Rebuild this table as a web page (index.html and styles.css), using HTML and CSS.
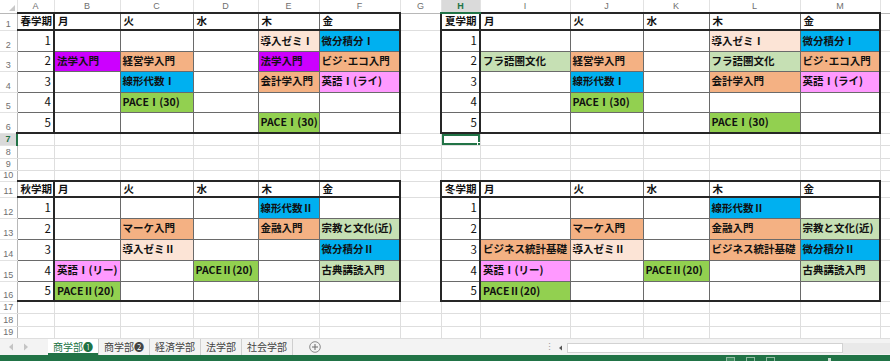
FILE: index.html
```html
<!DOCTYPE html>
<html lang="ja">
<head>
<meta charset="utf-8">
<title>時間割</title>
<link rel="stylesheet" href="styles.css">
</head>
<body>
<div class="book">
<table class="sheet">
<colgroup>
<col class="w17"><col class="w37"><col class="w66"><col class="w73"><col class="w65"><col class="w61"><col class="w81"><col class="w41"><col class="w39"><col class="w90"><col class="w73"><col class="w66"><col class="w91"><col class="w80"><col class="w10">
</colgroup>
<thead>
<tr class="h13"><th class="corner"></th><th>A</th><th>B</th><th>C</th><th>D</th><th>E</th><th>F</th><th>G</th><th class="cur">H</th><th>I</th><th>J</th><th>K</th><th>L</th><th>M</th><th></th></tr>
</thead>
<tbody>
<tr class="h17 top"><th>1</th><td class="t k term">春学期</td><td class="t">月</td><td class="t">火</td><td class="t">水</td><td class="t">木</td><td class="t f">金</td><td></td><td class="t k kl term">夏学期</td><td class="t">月</td><td class="t">火</td><td class="t">水</td><td class="t">木</td><td class="t f">金</td><td></td></tr>
<tr class="h21"><th>2</th><td class="t k n">1</td><td class="t"></td><td class="t"></td><td class="t"></td><td class="t pe">導入ゼミⅠ</td><td class="t f bl">微分積分Ⅰ</td><td></td><td class="t k kl n">1</td><td class="t"></td><td class="t"></td><td class="t"></td><td class="t pe">導入ゼミⅠ</td><td class="t f bl">微分積分Ⅰ</td><td></td></tr>
<tr class="h20"><th>3</th><td class="t k n">2</td><td class="t pu">法学入門</td><td class="t or">経営学入門</td><td class="t"></td><td class="t pu">法学入門</td><td class="t f or">ビジ･エコ入門</td><td></td><td class="t k kl n">2</td><td class="t lg">フラ語圏文化</td><td class="t or">経営学入門</td><td class="t"></td><td class="t lg">フラ語圏文化</td><td class="t f or">ビジ･エコ入門</td><td></td></tr>
<tr class="h21"><th>4</th><td class="t k n">3</td><td class="t"></td><td class="t bl">線形代数Ⅰ</td><td class="t"></td><td class="t or">会計学入門</td><td class="t f pk">英語Ⅰ(ライ)</td><td></td><td class="t k kl n">3</td><td class="t"></td><td class="t bl">線形代数Ⅰ</td><td class="t"></td><td class="t or">会計学入門</td><td class="t f pk">英語Ⅰ(ライ)</td><td></td></tr>
<tr class="h20"><th>5</th><td class="t k n">4</td><td class="t"></td><td class="t gr">PACEⅠ(30)</td><td class="t"></td><td class="t"></td><td class="t f"></td><td></td><td class="t k kl n">4</td><td class="t"></td><td class="t gr">PACEⅠ(30)</td><td class="t"></td><td class="t"></td><td class="t f"></td><td></td></tr>
<tr class="h21 last"><th>6</th><td class="t k n">5</td><td class="t"></td><td class="t"></td><td class="t"></td><td class="t gr">PACEⅠ(30)</td><td class="t f"></td><td></td><td class="t k kl n">5</td><td class="t"></td><td class="t"></td><td class="t"></td><td class="t gr">PACEⅠ(30)</td><td class="t f"></td><td></td></tr>
<tr class="h12"><th class="cur-row">7</th><td></td><td></td><td></td><td></td><td></td><td></td><td></td><td class="sel"><span class="handle"></span></td><td></td><td></td><td></td><td></td><td></td><td></td></tr>
<tr class="h13"><th>8</th><td></td><td></td><td></td><td></td><td></td><td></td><td></td><td></td><td></td><td></td><td></td><td></td><td></td><td></td></tr>
<tr class="h12"><th>9</th><td></td><td></td><td></td><td></td><td></td><td></td><td></td><td></td><td></td><td></td><td></td><td></td><td></td><td></td></tr>
<tr class="h11"><th>10</th><td></td><td></td><td></td><td></td><td></td><td></td><td></td><td></td><td></td><td></td><td></td><td></td><td></td><td></td></tr>
<tr class="h16 top"><th>11</th><td class="t k term">秋学期</td><td class="t">月</td><td class="t">火</td><td class="t">水</td><td class="t">木</td><td class="t f">金</td><td></td><td class="t k kl term">冬学期</td><td class="t">月</td><td class="t">火</td><td class="t">水</td><td class="t">木</td><td class="t f">金</td><td></td></tr>
<tr class="h21"><th>12</th><td class="t k n">1</td><td class="t"></td><td class="t"></td><td class="t"></td><td class="t bl">線形代数Ⅱ</td><td class="t f"></td><td></td><td class="t k kl n">1</td><td class="t"></td><td class="t"></td><td class="t"></td><td class="t bl">線形代数Ⅱ</td><td class="t f"></td><td></td></tr>
<tr class="h21"><th>13</th><td class="t k n">2</td><td class="t"></td><td class="t or">マーケ入門</td><td class="t"></td><td class="t or">金融入門</td><td class="t f lg">宗教と文化(近)</td><td></td><td class="t k kl n">2</td><td class="t"></td><td class="t or">マーケ入門</td><td class="t"></td><td class="t or">金融入門</td><td class="t f lg">宗教と文化(近)</td><td></td></tr>
<tr class="h21"><th>14</th><td class="t k n">3</td><td class="t"></td><td class="t pe">導入ゼミⅡ</td><td class="t"></td><td class="t"></td><td class="t f bl">微分積分Ⅱ</td><td></td><td class="t k kl n">3</td><td class="t or">ビジネス統計基礎</td><td class="t pe">導入ゼミⅡ</td><td class="t"></td><td class="t or">ビジネス統計基礎</td><td class="t f bl">微分積分Ⅱ</td><td></td></tr>
<tr class="h21"><th>15</th><td class="t k n">4</td><td class="t pk">英語Ⅰ(リー)</td><td class="t"></td><td class="t gr">PACEⅡ(20)</td><td class="t"></td><td class="t f lg">古典講読入門</td><td></td><td class="t k kl n">4</td><td class="t pk">英語Ⅰ(リー)</td><td class="t"></td><td class="t gr">PACEⅡ(20)</td><td class="t"></td><td class="t f lg">古典講読入門</td><td></td></tr>
<tr class="h20 last"><th>16</th><td class="t k n">5</td><td class="t gr">PACEⅡ(20)</td><td class="t"></td><td class="t"></td><td class="t"></td><td class="t f"></td><td></td><td class="t k kl n">5</td><td class="t gr">PACEⅡ(20)</td><td class="t"></td><td class="t"></td><td class="t"></td><td class="t f"></td><td></td></tr>
<tr class="h12"><th>17</th><td></td><td></td><td></td><td></td><td></td><td></td><td></td><td></td><td></td><td></td><td></td><td></td><td></td><td></td></tr>
<tr class="h13"><th>18</th><td></td><td></td><td></td><td></td><td></td><td></td><td></td><td></td><td></td><td></td><td></td><td></td><td></td><td></td></tr>
<tr class="h12"><th>19</th><td></td><td></td><td></td><td></td><td></td><td></td><td></td><td></td><td></td><td></td><td></td><td></td><td></td><td></td></tr>
</tbody>
</table>

<div class="tabbar">
  <div class="nav">
    <svg width="6" height="8" viewBox="0 0 6 8"><path d="M5 0.5 L1 4 L5 7.5 Z" fill="#c4c4c4"/></svg>
    <svg width="6" height="8" viewBox="0 0 6 8"><path d="M1 0.5 L5 4 L1 7.5 Z" fill="#c4c4c4"/></svg>
  </div>
  <div class="tabs">
    <div class="tab on">商学部❶</div>
    <div class="tab">商学部❷</div>
    <div class="tab">経済学部</div>
    <div class="tab">法学部</div>
    <div class="tab">社会学部</div>
  </div>
  <div class="add">
    <svg width="12" height="12" viewBox="0 0 12 12"><circle cx="6" cy="6" r="5.3" fill="none" stroke="#8a8a8a" stroke-width="1"/><path d="M6 3 V9 M3 6 H9" stroke="#6a6a6a" stroke-width="1"/></svg>
  </div>
  <div class="spacer"></div>
  <div class="hscroll">
    <div class="dots">⋮</div>
    <div class="larr"><svg width="5" height="6" viewBox="0 0 5 6"><path d="M4 0.5 L1 3 L4 5.5 Z" fill="#555"/></svg></div>
    <div class="track"></div>
    <div class="rest"></div>
  </div>
</div>
<div class="status">
  <div class="views"><span class="vb on"></span><span class="vb"></span><span class="vb"></span></div>
  <div class="zoomctl"><span class="knob"></span></div>
</div>
</div>
</body>
</html>
```

FILE: styles.css
```css
html, body {
  margin: 0;
  padding: 0;
  background: #ffffff;
}
body {
  width: 890px;
  height: 361px;
  overflow: hidden;
  font-family: "Noto Sans CJK JP", "Noto Sans", sans-serif;
}
.book {
  display: flex;
  flex-direction: column;
  width: 890px;
  height: 361px;
}
.sheet {
  border-collapse: collapse;
  table-layout: fixed;
  width: 890px;
}
.w17 { width: 17px; } .w37 { width: 37px; } .w66 { width: 66px; } .w73 { width: 73px; }
.w65 { width: 65px; } .w61 { width: 61px; } .w81 { width: 81px; } .w41 { width: 41px; }
.w39 { width: 39px; } .w90 { width: 90px; } .w91 { width: 91px; } .w80 { width: 80px; }
.w10 { width: 10px; }

.h11 { height: 11px; } .h12 { height: 12px; } .h13 { height: 13px; } .h16 { height: 16px; }
.h17 { height: 17px; } .h20 { height: 20px; } .h21 { height: 21px; }

.sheet th, .sheet td {
  padding: 0;
  overflow: hidden;
  white-space: nowrap;
  line-height: 1;
}
.sheet td {
  border: 1px solid #dedede;
  font-size: 10.5px;
  font-weight: 700;
  color: #111;
  padding: 0 2px;
  vertical-align: middle;
}
.sheet thead th {
  font-family: "Liberation Sans", "Noto Sans", sans-serif;
  font-weight: 400;
  font-size: 9px;
  color: #6f6f6f;
  background: #ffffff;
  border-right: 1px solid #e2e2e2;
  border-bottom: 1px solid #b8b8b8;
  text-align: center;
  vertical-align: middle;
}
.sheet thead th.corner {
  position: relative;
}
.sheet thead th.corner::after {
  content: "";
  position: absolute;
  right: 2px;
  bottom: 2px;
  border-left: 6px solid transparent;
  border-bottom: 6px solid #c8c8c8;
}
.sheet thead th.cur {
  background: #dadada;
  color: #217346;
  font-weight: 700;
  border-bottom: 2px solid #217346;
}
.sheet tbody th {
  font-family: "Liberation Sans", "Noto Sans", sans-serif;
  font-weight: 400;
  font-size: 9px;
  color: #6f6f6f;
  background: #ffffff;
  border-right: 1px solid #b8b8b8;
  border-bottom: 1px solid #e2e2e2;
  text-align: center;
  vertical-align: bottom;
  padding-bottom: 1px;
}
.sheet tbody th.cur-row {
  background: #dadada;
  color: #217346;
  font-weight: 700;
  border-right: 2px solid #217346;
}

/* timetable cells */
.sheet td.t { border: 1px solid #6a6a6a; }
.sheet tr.top td.t { border-top: 2px solid #262626; border-bottom: 2px solid #262626; }
.sheet tr.last td.t { border-bottom: 2px solid #262626; }
.sheet td.t.k { border-right: 2px solid #262626; }
.sheet td.t.kl { border-left: 2px solid #262626; }
.sheet td.t.f { border-right: 2px solid #262626; }
.sheet td.term { padding: 0 1px; }
.sheet td.n {
  text-align: right;
  font-size: 11.5px;
  font-weight: 400;
  padding-right: 2px;
}
.sheet tr.top td.t { padding-left: 3px; }

.pu { background: #cc00ff; }
.or { background: #f4b183; }
.bl { background: #00b0f0; }
.gr { background: #92d050; }
.pe { background: #fce4d6; }
.pk { background: #ff99ff; }
.lg { background: #c6e0b4; }

.sheet td.sel {
  position: relative;
  box-shadow: inset 0 0 0 2px #217346;
}
.handle {
  position: absolute;
  right: -3px;
  bottom: -3px;
  width: 4px;
  height: 4px;
  background: #217346;
  border: 1px solid #ffffff;
}

/* sheet tabs */
.tabbar {
  display: flex;
  align-items: stretch;
  height: 16px;
  background: #f3f3f3;
  font-size: 10px;
  color: #444;
}
.nav {
  width: 48px;
  display: flex;
  align-items: center;
  gap: 9px;
  padding-left: 8px;
  box-sizing: border-box;
}
.tabs {
  display: flex;
}
.tab {
  display: flex;
  align-items: center;
  padding: 0 5px;
  border-right: 1px solid #cfcfcf;
  line-height: 1;
  white-space: nowrap;
}
.tab.on {
  background: #ffffff;
  color: #217346;
  box-shadow: inset 0 -2px 0 #217346;
}
.add {
  display: flex;
  align-items: center;
  margin-left: 16px;
}
.spacer { flex: 1; }
.hscroll {
  display: flex;
  align-items: center;
}
.dots {
  width: 10px;
  font-size: 9px;
  color: #9a9a9a;
  text-align: center;
  line-height: 1;
}
.larr {
  width: 13px;
  height: 10px;
  display: flex;
  align-items: center;
  justify-content: center;
  margin-top: 3px;
}
.track {
  width: 276px;
  height: 10px;
  margin-top: 3px;
  background: #ffffff;
  border: 1px solid #d2d2d2;
  box-sizing: border-box;
}
.rest {
  width: 47px;
  height: 11px;
  margin-top: 3px;
  background: #e9e9e9;
}

.status {
  flex: 1;
  background: #217346;
  display: flex;
  align-items: flex-start;
  padding-left: 726px;
  gap: 13px;
  overflow: hidden;
}
.views {
  display: flex;
  gap: 11px;
  padding-top: 2px;
}
.vb {
  width: 9px;
  height: 8px;
  border: 1px solid #8fb9a0;
  box-sizing: border-box;
}
.vb.on { background: #3c8a5d; }
.zoomctl {
  width: 60px;
  height: 5px;
  position: relative;
}
.knob {
  position: absolute;
  left: 40px;
  top: 3px;
  width: 3px;
  height: 6px;
  background: #c9dccf;
}
```
